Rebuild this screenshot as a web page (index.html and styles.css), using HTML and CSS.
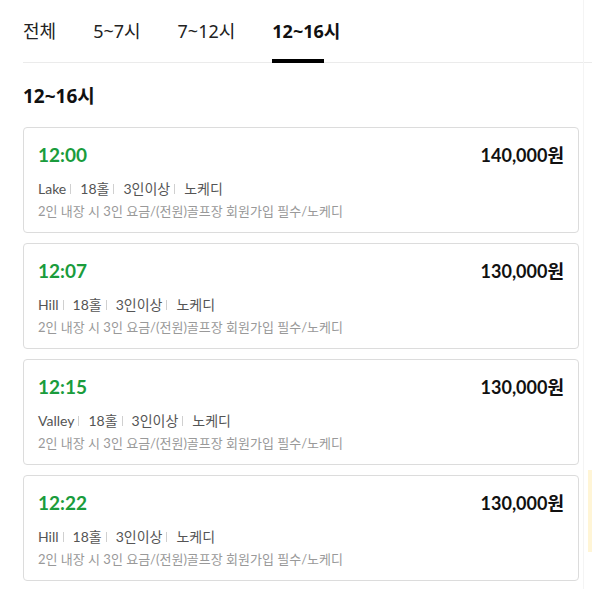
FILE: index.html
```html
<!DOCTYPE html>
<html lang="ko">
<head>
  <meta charset="UTF-8">
  <meta name="viewport" content="width=device-width, initial-scale=1.0">
  <title>티타임</title>
  <link rel="stylesheet" href="styles.css">
</head>
<body>
  <div class="page">
    <ul class="tabs">
      <li class="tab">전체</li>
      <li class="tab">5~7시</li>
      <li class="tab">7~12시</li>
      <li class="tab active">12~16시</li>
    </ul>

    <h2 class="section-title">12~16시</h2>

    <div class="slot-list">
      <div class="slot">
        <div class="slot-top">
          <span class="slot-time">12:00</span>
          <span class="slot-price">140,000원</span>
        </div>
        <div class="slot-info">
          <span>Lake</span><i class="sep"></i><span>18홀</span><i class="sep"></i><span>3인이상</span><i class="sep"></i><span>노케디</span>
        </div>
        <div class="slot-note">2인 내장 시 3인 요금/(전원)골프장 회원가입 필수/노케디</div>
      </div>

      <div class="slot">
        <div class="slot-top">
          <span class="slot-time">12:07</span>
          <span class="slot-price">130,000원</span>
        </div>
        <div class="slot-info">
          <span>Hill</span><i class="sep"></i><span>18홀</span><i class="sep"></i><span>3인이상</span><i class="sep"></i><span>노케디</span>
        </div>
        <div class="slot-note">2인 내장 시 3인 요금/(전원)골프장 회원가입 필수/노케디</div>
      </div>

      <div class="slot">
        <div class="slot-top">
          <span class="slot-time">12:15</span>
          <span class="slot-price">130,000원</span>
        </div>
        <div class="slot-info">
          <span>Valley</span><i class="sep"></i><span>18홀</span><i class="sep"></i><span>3인이상</span><i class="sep"></i><span>노케디</span>
        </div>
        <div class="slot-note">2인 내장 시 3인 요금/(전원)골프장 회원가입 필수/노케디</div>
      </div>

      <div class="slot">
        <div class="slot-top">
          <span class="slot-time">12:22</span>
          <span class="slot-price">130,000원</span>
        </div>
        <div class="slot-info">
          <span>Hill</span><i class="sep"></i><span>18홀</span><i class="sep"></i><span>3인이상</span><i class="sep"></i><span>노케디</span>
        </div>
        <div class="slot-note">2인 내장 시 3인 요금/(전원)골프장 회원가입 필수/노케디</div>
      </div>
    </div>
  </div>

  <div class="scroll-track"><div class="scroll-thumb"></div></div>
</body>
</html>
```

FILE: styles.css
```css
body {
  margin: 0;
  background: #fff;
  color: #111;
  font-family: "Noto Sans", "Noto Sans CJK KR", sans-serif;
}
.page {
  padding: 0 15px 0 23px;
}
.tabs {
  list-style: none;
  margin: 0;
  padding: 16px 0 0;
  display: flex;
  gap: 37px;
  border-bottom: 1px solid #ebebeb;
}
.tab {
  position: relative;
  font-size: 18px;
  line-height: 30px;
  height: 46px;
  color: #222;
}
.tab.active {
  font-weight: bold;
  color: #111;
}
.tab.active::after {
  content: "";
  position: absolute;
  left: 0;
  bottom: -1px;
  width: 52px;
  height: 4px;
  background: #000;
}
.section-title {
  margin: 18px 0 0;
  font-size: 19px;
  line-height: 30px;
  font-weight: bold;
}
.slot-list {
  display: flex;
  flex-direction: column;
  gap: 10px;
  margin-top: 16px;
  width: 556px;
}
.slot {
  border: 1px solid #dcdcdc;
  border-radius: 4px;
  padding: 13px 14px 10px;
  font-family: Lato, "Noto Sans CJK KR", sans-serif;
}
.slot-top {
  display: flex;
  justify-content: space-between;
  align-items: center;
  height: 26px;
}
.slot-time {
  color: #1a9c3c;
  font-size: 19px;
  font-weight: bold;
}
.slot-price {
  color: #111;
  font-size: 18px;
  font-weight: bold;
}
.slot-info {
  margin-top: 11px;
  display: flex;
  align-items: center;
  font-size: 14px;
  line-height: 22px;
  color: #555;
}
.sep {
  display: inline-block;
  width: 1px;
  height: 10px;
  background: #d0d0d0;
  margin: 0 9px 0 4px;
}
.slot-note {
  font-size: 13px;
  line-height: 22px;
  color: #999;
}
.scroll-track {
  position: absolute;
  top: 0;
  left: 583px;
  width: 1px;
  height: 589px;
  background: #f4f4f4;
}
.scroll-thumb {
  position: absolute;
  top: 470px;
  left: 5px;
  width: 4px;
  height: 82px;
  background: #fff5d6;
}
```
